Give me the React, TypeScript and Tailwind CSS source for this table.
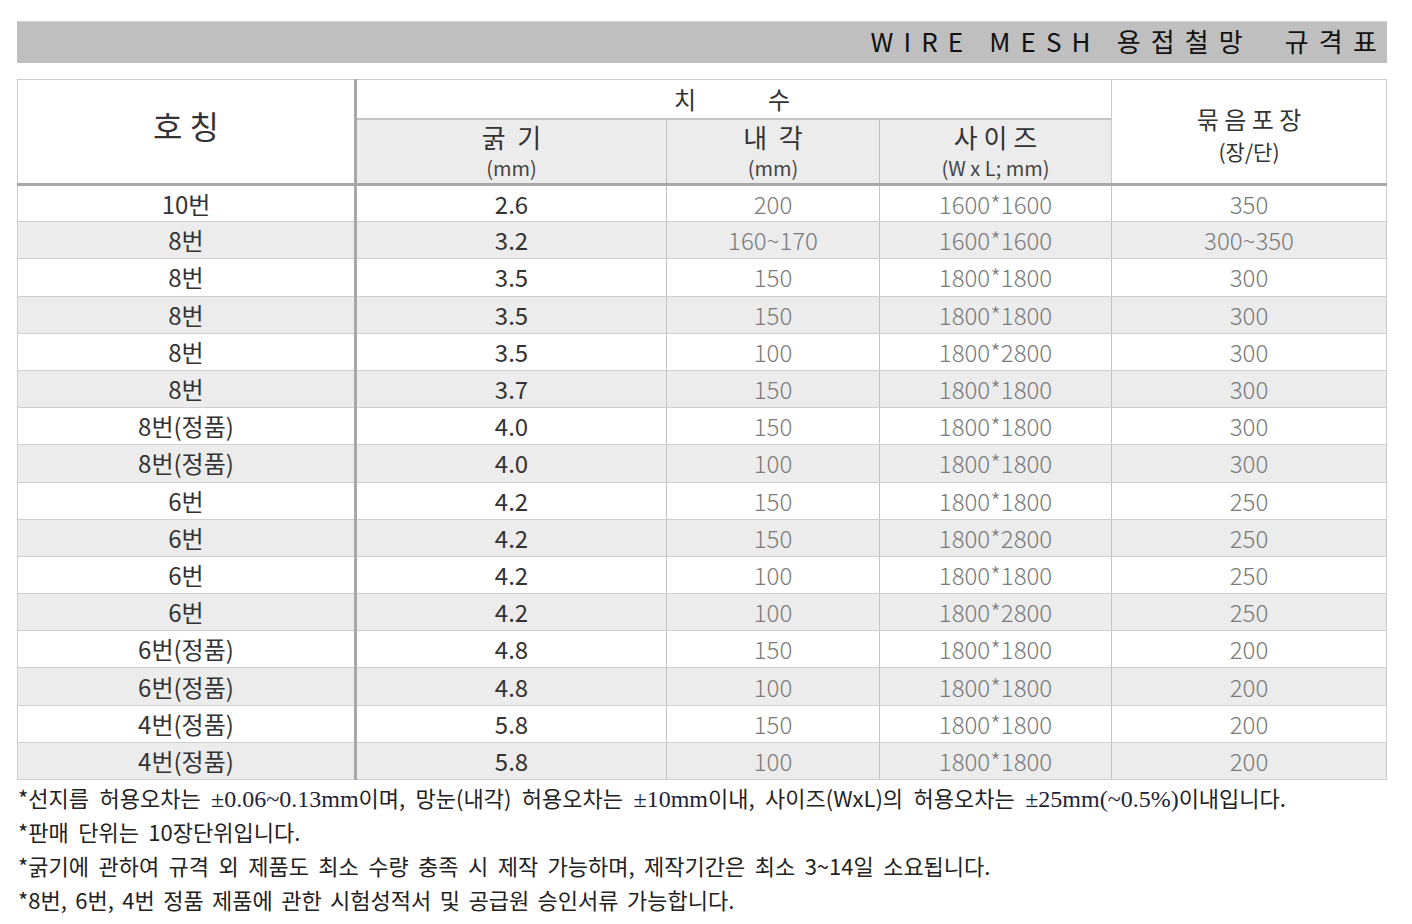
import React from 'react'

// 규격표 데이터 (호칭, 굵기, 내각, 사이즈, 묶음포장)
const rows: [string, string, string, string, string][] = [
  ['10번', '2.6', '200', '1600*1600', '350'],
  ['8번', '3.2', '160~170', '1600*1600', '300~350'],
  ['8번', '3.5', '150', '1800*1800', '300'],
  ['8번', '3.5', '150', '1800*1800', '300'],
  ['8번', '3.5', '100', '1800*2800', '300'],
  ['8번', '3.7', '150', '1800*1800', '300'],
  ['8번(정품)', '4.0', '150', '1800*1800', '300'],
  ['8번(정품)', '4.0', '100', '1800*1800', '300'],
  ['6번', '4.2', '150', '1800*1800', '250'],
  ['6번', '4.2', '150', '1800*2800', '250'],
  ['6번', '4.2', '100', '1800*1800', '250'],
  ['6번', '4.2', '100', '1800*2800', '250'],
  ['6번(정품)', '4.8', '150', '1800*1800', '200'],
  ['6번(정품)', '4.8', '100', '1800*1800', '200'],
  ['4번(정품)', '5.8', '150', '1800*1800', '200'],
  ['4번(정품)', '5.8', '100', '1800*1800', '200'],
]

const sans = "font-['Noto_Sans_CJK_KR','Noto_Sans',sans-serif]"
const serif = "font-['Liberation_Serif','Noto_Sans_CJK_KR',serif] text-[24px] leading-none text-[#1c2238] [word-spacing:0]"

export default function App() {
  return (
    <div className={`${sans} bg-white min-h-[924px] pt-[21px] pl-[17px]`}>
      <div className="w-[1370px]">
        {/* 타이틀 바 */}
        <div className="h-[42px] bg-[#bfbfbf] border-t border-[#d4d4d4] flex items-center justify-end pb-[3px]">
          <span className="text-[26px] leading-none tracking-[0.39em] text-[#111] whitespace-pre">
            {'WIRE MESH 용접철망  규격표'}
          </span>
        </div>

        {/* 규격표 */}
        <table className="mt-[16px] w-[1369px] table-fixed border-collapse border border-[#cccccc] text-[#333]">
          <colgroup>
            <col className="w-[338px]" />
            <col className="w-[311px]" />
            <col className="w-[213px]" />
            <col className="w-[232px]" />
            <col className="w-[275px]" />
          </colgroup>
          <thead>
            <tr className="h-[39px]">
              <td rowSpan={2} className="border-r-[3px] border-r-[#a8a8a8] border-b-[3px] border-b-[#a8a8a8] text-center align-middle pb-[14px]">
                <span className="text-[32px] whitespace-pre">{'호 칭'}</span>
              </td>
              <td colSpan={3} className="border-b-[2px] border-b-[#c4c4c4] text-center align-middle">
                <span className="inline-flex gap-[72px] text-[24px] relative left-[-2px]">
                  <span>치</span>
                  <span>수</span>
                </span>
              </td>
              <td rowSpan={2} className="border-l border-l-[#cccccc] border-b-[3px] border-b-[#a8a8a8] text-center align-middle pt-[6px]">
                <div className="text-[24px] leading-[32px] whitespace-pre">{'묶 음 포 장'}</div>
                <div className="text-[21px] leading-[32px]">(장/단)</div>
              </td>
            </tr>
            <tr className="h-[66px] bg-[#ececec]">
              <td className="border-b-[3px] border-b-[#a8a8a8] text-center align-middle">
                <div className="text-[26px] leading-[34px] whitespace-pre">{'굵  기'}</div>
                <div className="text-[20px] leading-[28px] text-[#444]">(mm)</div>
              </td>
              <td className="border-l border-l-[#bdbdbd] border-b-[3px] border-b-[#a8a8a8] text-center align-middle">
                <div className="text-[26px] leading-[34px] whitespace-pre">{'내  각'}</div>
                <div className="text-[20px] leading-[28px] text-[#444]">(mm)</div>
              </td>
              <td className="border-l border-l-[#bdbdbd] border-b-[3px] border-b-[#a8a8a8] text-center align-middle">
                <div className="text-[26px] leading-[34px] whitespace-pre">{'사 이 즈'}</div>
                <div className="text-[20px] leading-[28px] text-[#444]">(W x L; mm)</div>
              </td>
            </tr>
          </thead>
          <tbody>
            {rows.map((r, i) => (
              <tr key={i} className={`h-[37.2px] ${i % 2 === 1 ? 'bg-[#ececec]' : 'bg-white'}`}>
                <td className="border-r-[3px] border-r-[#a8a8a8] border-b border-b-[#cfcfcf] text-center text-[24px] leading-none text-[#333]">
                  {r[0]}
                </td>
                <td className="border-b border-b-[#cfcfcf] text-center text-[24px] leading-none text-[#333]">
                  {r[1]}
                </td>
                <td className="border-l border-l-[#c4c4c4] border-b border-b-[#cfcfcf] text-center text-[24px] leading-none font-light text-[#7a7a7a]">
                  {r[2]}
                </td>
                <td className="border-l border-l-[#c4c4c4] border-b border-b-[#cfcfcf] text-center text-[24px] leading-none font-light text-[#7a7a7a]">
                  {r[3]}
                </td>
                <td className="border-l border-l-[#c4c4c4] border-b border-b-[#cfcfcf] text-center text-[24px] leading-none font-light text-[#7a7a7a]">
                  {r[4]}
                </td>
              </tr>
            ))}
          </tbody>
        </table>

        {/* 안내 문구 */}
        <div className="text-[22px] leading-[34px] text-[#222] pl-[1px] whitespace-nowrap [word-spacing:4.5px]">
          <p className="[word-spacing:5.5px]">
            *선지름 허용오차는 <span className={serif}>±0.06~0.13mm</span>이며, 망눈(내각) 허용오차는{' '}
            <span className={serif}>±10mm</span>이내, 사이즈(WxL)의 허용오차는{' '}
            <span className={serif}>±25mm(~0.5%)</span>이내입니다.
          </p>
          <p>*판매 단위는 10장단위입니다.</p>
          <p>*굵기에 관하여 규격 외 제품도 최소 수량 충족 시 제작 가능하며, 제작기간은 최소 3~14일 소요됩니다.</p>
          <p className="[word-spacing:3.5px]">*8번, 6번, 4번 정품 제품에 관한 시험성적서 및 공급원 승인서류 가능합니다.</p>
        </div>
      </div>
    </div>
  )
}
